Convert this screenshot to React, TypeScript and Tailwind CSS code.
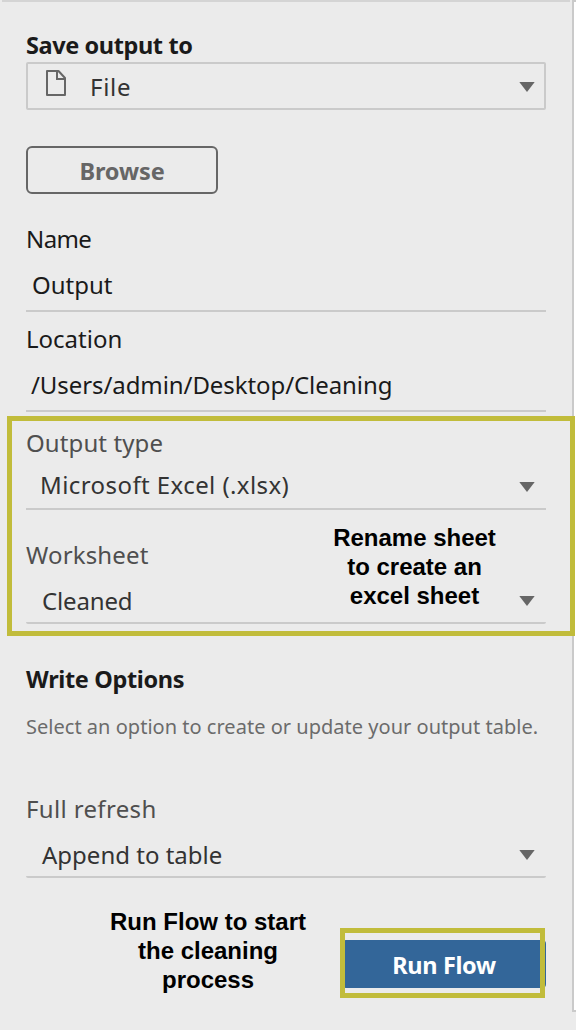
import type { ReactNode } from "react";

function Caret() {
  return (
    <svg width="16" height="10" viewBox="0 0 16 10" className="shrink-0 fill-[#666666]">
      <path d="M0.3 0H15.7L8 10Z" />
    </svg>
  );
}

function FileIcon() {
  return (
    <svg width="20" height="26" viewBox="0 0 20 26" fill="none" stroke="#666666" strokeWidth="2" strokeLinejoin="round">
      <path d="M1 1H12.5L19 8V25H1Z" />
      <path d="M11 1V9H19" strokeLinejoin="miter" />
    </svg>
  );
}

function Label({ className, children }: { className: string; children: ReactNode }) {
  return <div className={"h-8 leading-8 whitespace-nowrap " + className}>{children}</div>;
}

function Select({ className, caret, children }: { className: string; caret: string; children: ReactNode }) {
  return (
    <div className={"flex w-[520px] items-start justify-between border-b-2 border-[#cacaca] pr-[11px] leading-8 text-[#333333] " + className}>
      <span className="whitespace-nowrap">{children}</span>
      <span className={"flex " + caret}>
        <Caret />
      </span>
    </div>
  );
}

export default function App() {
  return (
    <div className="flex h-[1030px] w-[576px] overflow-hidden bg-[#ebebeb] font-['Noto_Sans','Open_Sans',sans-serif] text-2xl text-[#1a1a1a]">
      <main className="relative z-10 flex h-full w-[572px] shrink-0 flex-col">
        <div className="ml-0.5 h-0.5 w-[568px] shrink-0 bg-[#d4d4d4]" />
        <div className="px-[26px] pt-[27px]">
          <Label className="text-[23.5px] font-bold tracking-[-0.4px]">Save output to</Label>
          <div className="mt-px flex h-12 w-[520px] justify-between rounded-[2px] border-2 border-[#cacaca] pr-[9px] pl-[18px]">
            <div className="flex text-[#333333]">
              <span className="pt-[6px]">
                <FileIcon />
              </span>
              <span className="pt-[7px] pl-6 leading-8 tracking-[0.7px]">File</span>
            </div>
            <span className="flex pt-[18px]">
              <Caret />
            </span>
          </div>
          <button className="mt-9 flex h-12 w-48 items-center justify-center rounded-[6px] border-2 border-[#666666] pt-0.5 text-[23.5px] leading-8 font-bold tracking-[-0.1px] text-[#666666]">
            Browse
          </button>
          <Label className="mt-[29px] tracking-[-0.6px]">Name</Label>
          <div className="mt-3.5 h-[43px] w-[520px] border-b-2 border-[#cacaca] pl-1.5 leading-8">Output</div>
          <Label className="mt-[11px]">Location</Label>
          <div className="mt-3.5 h-[43px] w-[520px] border-b-2 border-[#cacaca] pl-[5px] leading-8 tracking-[-0.08px]">
            /Users/admin/Desktop/Cleaning
          </div>
        </div>

        <section className="relative mt-1 ml-[7px] h-[220px] w-[568px] shrink-0 border-[5px] border-[#c1bc3b] bg-[#ebebeb] pt-1.5 pl-3.5">
          <Label className="tracking-[0.1px] text-[#4f4f4f]">Output type</Label>
          <Select className="mt-2.5 h-[41px] pl-3.5 tracking-[0.42px]" caret="pt-[13px]">
            Microsoft Excel (.xlsx)
          </Select>
          <Label className="mt-[29px] tracking-[0.15px] text-[#4f4f4f]">Worksheet</Label>
          <Select className="mt-3.5 h-[39px] rounded-[2px] pl-4 tracking-[-0.15px]" caret="pt-[11px]">
            Cleaned
          </Select>
          <p className="absolute top-[102px] left-[302px] w-[201px] text-center font-['Liberation_Sans',Arial,sans-serif] leading-[29px] font-bold text-black">
            Rename sheet
            <br />
            to create an
            <br />
            excel sheet
          </p>
        </section>

        <div className="px-[26px] pt-[27px]">
          <Label className="text-[23.5px] font-bold tracking-[-0.35px]">Write Options</Label>
          <Label className="mt-4 text-xl tracking-[0.02px] text-[#6b6b6b]">
            Select an option to create or update your output table.
          </Label>
          <Label className="mt-[50px] tracking-[0.35px] text-[#4f4f4f]">Full refresh</Label>
          <Select className="mt-3.5 h-[39px] rounded-[2px] pl-4" caret="pt-[11px]">
            Append to table
          </Select>
        </div>

        <div className="flex items-start pt-[29px] pl-[98px]">
          <p className="w-[220px] text-center font-['Liberation_Sans',Arial,sans-serif] leading-[29px] font-bold text-black">
            Run Flow to start
            <br />
            the cleaning
            <br />
            process
          </p>
          <div className="relative mt-[33px] ml-6 flex">
            <button className="flex h-12 w-[204px] items-center justify-center rounded-[4px] bg-[#336699] pt-0.5 text-[23.5px] leading-8 font-bold tracking-[-0.35px] text-white">
              Run Flow
            </button>
            <span className="absolute -top-3 -left-0.5 h-[70px] w-[205px] border-[5px] border-[#c1bc3b]" />
          </div>
        </div>
      </main>
      <aside className="h-[1012px] w-1 shrink-0 border-y-2 border-l-2 border-[#cacaca] bg-white" />
    </div>
  );
}
